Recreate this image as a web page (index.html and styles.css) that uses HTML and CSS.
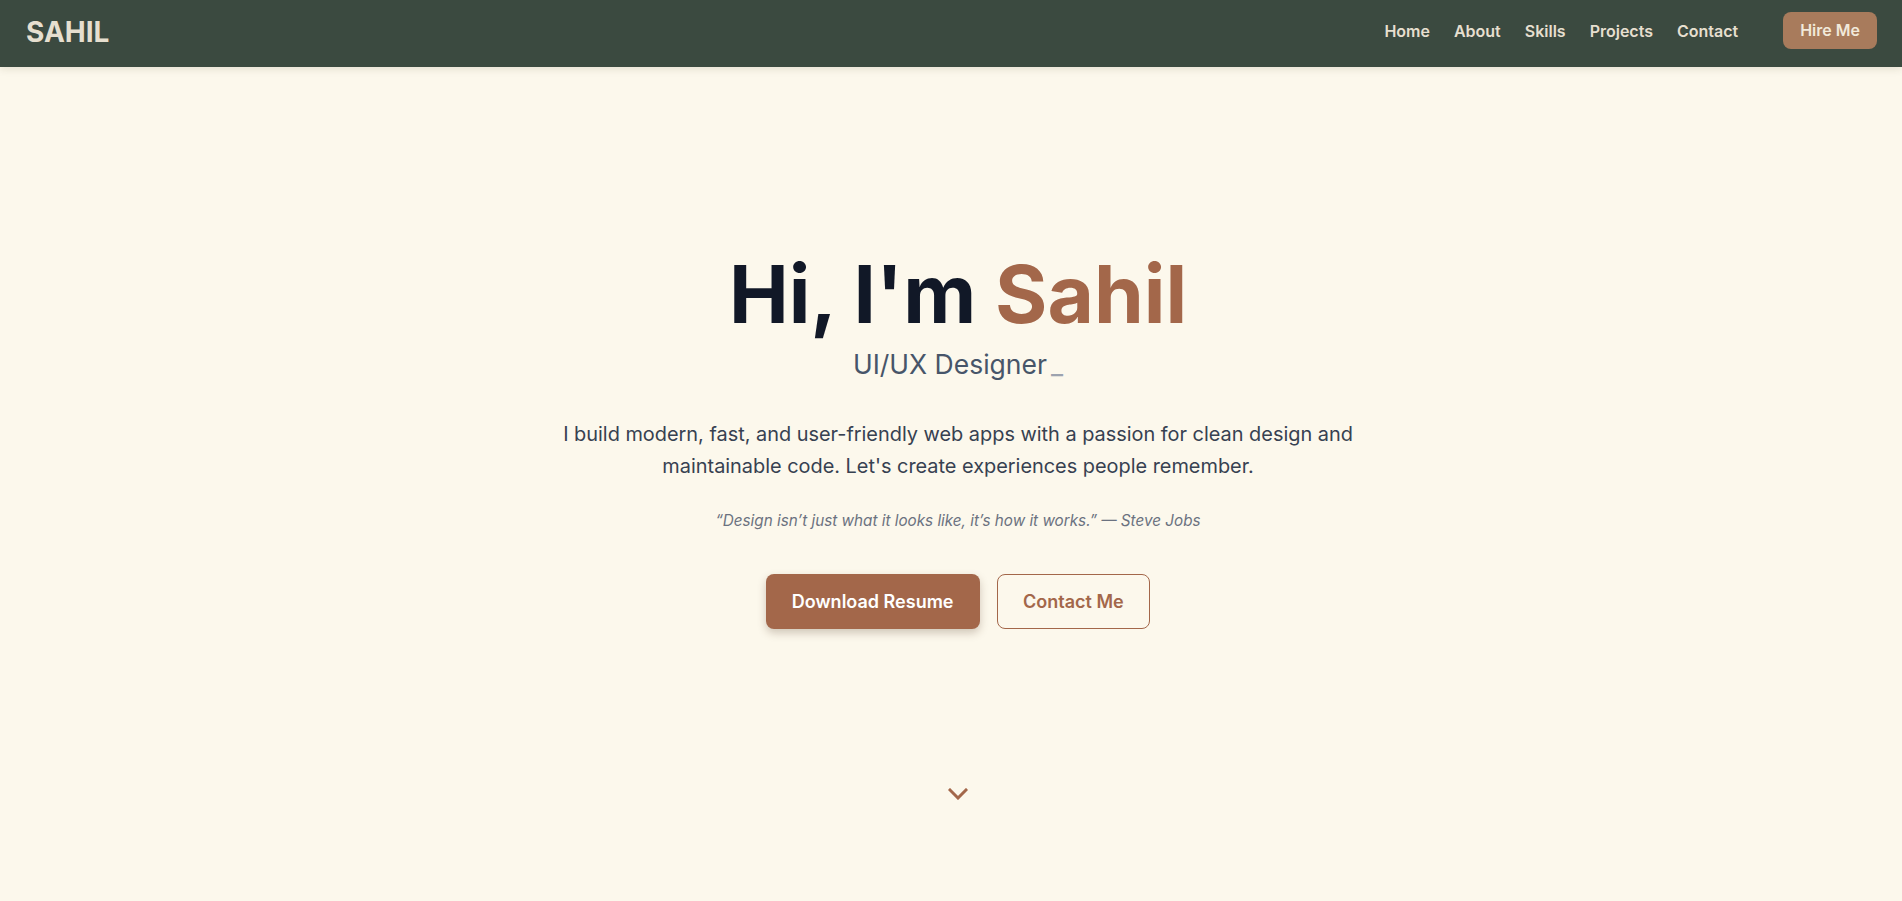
FILE: index.html
```html
<!DOCTYPE html>
<html lang="en">
<head>
<meta charset="utf-8">
<title>Sahil — Portfolio</title>
<link rel="stylesheet" href="styles.css">
</head>
<body>
<header class="navbar">
  <a class="logo" href="#">SAHIL</a>
  <nav class="nav-right">
    <ul class="nav-links">
      <li><a href="#">Home</a></li>
      <li><a href="#">About</a></li>
      <li><a href="#">Skills</a></li>
      <li><a href="#">Projects</a></li>
      <li><a href="#">Contact</a></li>
    </ul>
    <a class="hire-btn" href="#">Hire Me</a>
  </nav>
</header>
<main class="hero">
  <h1 class="hero-title">Hi, I'm <span class="accent">Sahil</span></h1>
  <p class="hero-role">UI/UX Designer<span class="cursor">_</span></p>
  <p class="hero-text">I build modern, fast, and user-friendly web apps with a passion for clean design and maintainable code. Let's create experiences people remember.</p>
  <p class="hero-quote">“Design isn’t just what it looks like, it’s how it works.” — Steve Jobs</p>
  <div class="hero-actions">
    <a class="btn btn-primary" href="#">Download Resume</a>
    <a class="btn btn-outline" href="#">Contact Me</a>
  </div>
  <div class="scroll-down">
    <svg width="20" height="12" viewBox="0 0 20 12" fill="none"><path d="M2 2l8 8 8-8" stroke="#a3674a" stroke-width="3" stroke-linecap="square" stroke-linejoin="miter"/></svg>
  </div>
</main>
</body>
</html>
```
FILE: styles.css
```css
* { box-sizing: border-box; }
html, body { margin: 0; padding: 0; }
body {
  background: #fcf8ec;
  font-family: Inter, "Noto Sans", sans-serif;
  color: #1f2937;
  min-height: 901px;
}
a { text-decoration: none; color: inherit; }

.navbar {
  height: 67px;
  background: #3b4a40;
  display: flex;
  align-items: center;
  justify-content: space-between;
  padding: 0 25px 6px 26px;
  box-shadow: 0 2px 8px rgba(60, 50, 20, 0.12);
  position: relative;
  z-index: 2;
}
.logo {
  font-size: 28px;
  font-weight: 700;
  color: #e6dfcf;
  line-height: 1;
  margin-top: 2px;
}
.nav-right {
  display: flex;
  align-items: center;
  gap: 45px;
}
.nav-links {
  list-style: none;
  margin: 0;
  padding: 0;
  display: flex;
  gap: 24px;
}
.nav-links a {
  font-size: 16px;
  font-weight: 600;
  color: #e6dfcf;
}
.hire-btn {
  display: inline-block;
  background: #a87b5c;
  color: #f1e9da;
  font-size: 16px;
  font-weight: 600;
  line-height: 21px;
  padding: 8px 17px;
  border-radius: 8px;
}

.hero {
  display: flex;
  flex-direction: column;
  align-items: center;
  text-align: center;
  padding-top: 187px;
  padding-left: 14px;
}
.hero-title {
  margin: 0;
  font-size: 80px;
  font-weight: 700;
  line-height: 1;
  color: #111827;
}
.accent { color: #a3674a; }
.hero-role {
  margin: 11px 0 0;
  font-size: 26.5px;
  line-height: 39px;
  color: #475569;
  font-weight: 400;
}
.cursor {
  color: #9ca3af;
  margin-left: 4px;
}
.hero-text {
  margin: 34px 0 0;
  max-width: 820px;
  font-size: 19.9px;
  line-height: 32px;
  color: #374151;
}
.hero-quote {
  margin: 28px 0 0;
  font-size: 15.25px;
  line-height: 22px;
  font-style: italic;
  color: #6b7280;
}
.hero-actions {
  margin-top: 42px;
  display: flex;
  gap: 17px;
}
.btn {
  display: inline-block;
  font-size: 18px;
  font-weight: 600;
  line-height: 27px;
  padding: 14px 26px;
  border-radius: 8px;
}
.btn-primary {
  background: #a3674a;
  color: #fff;
  box-shadow: 0 4px 8px rgba(80, 50, 30, 0.25);
}
.btn-outline {
  border: 1px solid #a3674a;
  color: #a3674a;
  padding: 13px 25.5px;
}
.scroll-down {
  margin-top: 159px;
  height: 12px;
  line-height: 0;
}
```
